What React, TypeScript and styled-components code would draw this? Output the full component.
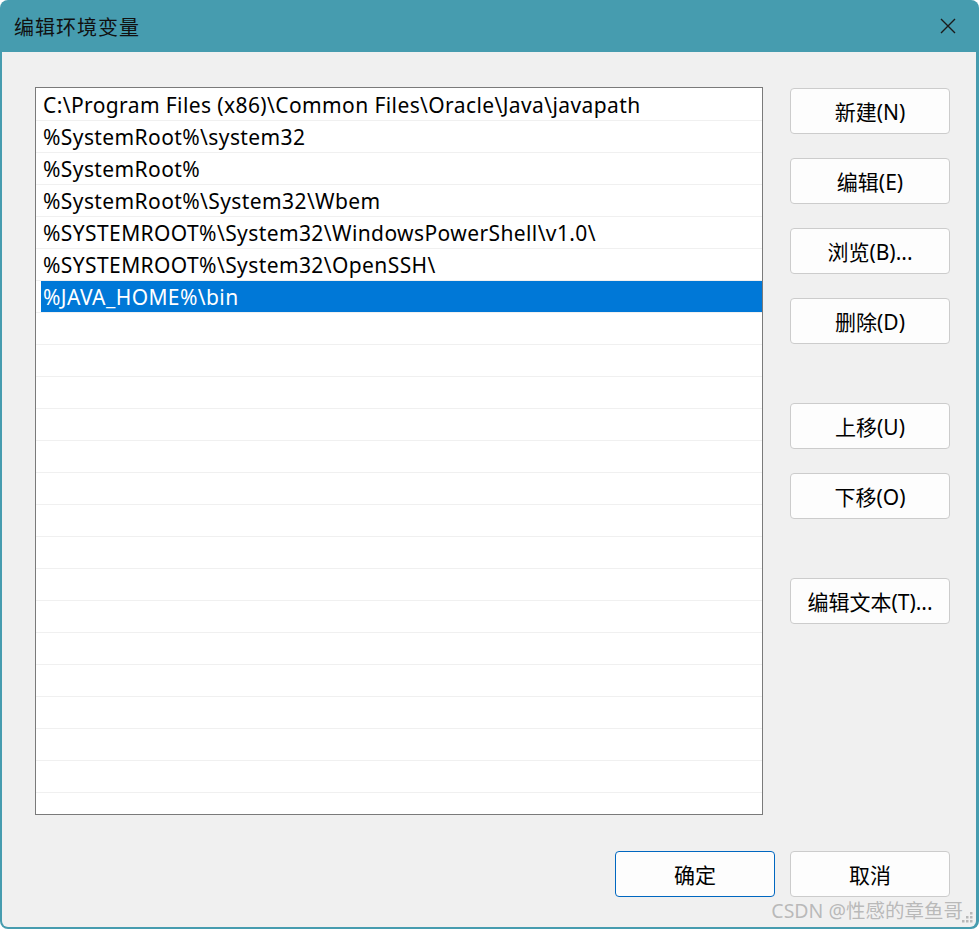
import React from "react";
import styled, { createGlobalStyle } from "styled-components";

const GlobalStyle = createGlobalStyle`
  html, body { margin: 0; padding: 0; background: #ffffff; }
  body { font-family: "Noto Sans", "Noto Sans CJK SC", sans-serif; }
  * { box-sizing: border-box; }
`;

const Window = styled.div`
  position: relative;
  width: 979px;
  height: 929px;
  background: #469caf;
  border-radius: 8px;
  padding: 0 3px 2px 2px;
  display: flex;
  flex-direction: column;
  overflow: hidden;
`;

const TitleBar = styled.div`
  height: 52px;
  flex: none;
  display: flex;
  align-items: center;
  justify-content: space-between;
  padding: 0 20px 0 12px;
`;

const Title = styled.div`
  font-family: "Noto Sans CJK SC", sans-serif;
  font-size: 20px;
  letter-spacing: 1px;
  color: #111;
`;

const Close = styled.svg`
  width: 16px;
  height: 16px;
`;

const Body = styled.div`
  flex: 1;
  background: #f0f0f0;
  border-radius: 0 0 6px 6px;
  padding: 35px 0 0 33px;
  display: flex;
  flex-direction: column;
`;

const Main = styled.div`
  display: flex;
  gap: 27px;
`;

const List = styled.div`
  width: 728px;
  height: 728px;
  padding-top: 1px;
  border: 1px solid #7a7a7a;
  background: #ffffff;
  overflow: hidden;
`;

const Row = styled.div`
  height: 32px;
  border-bottom: 1px solid #f0f0f0;
  display: flex;
`;

const Cell = styled.div<{ $selected?: boolean }>`
  flex: 1;
  margin-left: 5px;
  padding: 1px 0 0 2px;
  background: ${(p) => (p.$selected ? "#0078d7" : "transparent")};
  color: ${(p) => (p.$selected ? "#ffffff" : "#000000")};
  font-family: "Noto Sans", sans-serif;
  font-size: 21px;
  letter-spacing: 0.4px;
  line-height: 30px;
  white-space: nowrap;
`;

const SideButtons = styled.div`
  display: flex;
  flex-direction: column;
  padding-top: 1px;
`;

const Button = styled.button<{ $gap?: number; $primary?: boolean }>`
  width: 160px;
  height: 46px;
  margin-top: ${(p) => p.$gap ?? 0}px;
  border: 1px solid ${(p) => (p.$primary ? "#0067c0" : "#cccccc")};
  border-radius: 4px;
  background: #fdfdfd;
  color: #000;
  font-family: "Noto Sans", "Noto Sans CJK SC", sans-serif;
  font-size: 21px;
  padding: 0;
  display: flex;
  align-items: center;
  justify-content: center;
`;

const Footer = styled.div`
  display: flex;
  justify-content: flex-end;
  gap: 15px;
  padding: 0 26px 0 0;
  margin-top: 36px;
`;

const Watermark = styled.div`
  position: absolute;
  right: 16px;
  bottom: 5px;
  font-family: "Noto Sans", "Noto Sans CJK SC", sans-serif;
  font-size: 19.5px;
  color: rgba(130, 130, 130, 0.5);
  pointer-events: none;
`;

const Grip = styled.svg`
  position: absolute;
  right: 5px;
  bottom: 5px;
  width: 14px;
  height: 14px;
`;

const entries = [
  "C:\\Program Files (x86)\\Common Files\\Oracle\\Java\\javapath",
  "%SystemRoot%\\system32",
  "%SystemRoot%",
  "%SystemRoot%\\System32\\Wbem",
  "%SYSTEMROOT%\\System32\\WindowsPowerShell\\v1.0\\",
  "%SYSTEMROOT%\\System32\\OpenSSH\\",
  "%JAVA_HOME%\\bin",
];

const side: { label: string; gap: number }[] = [
  { label: "新建(N)", gap: 0 },
  { label: "编辑(E)", gap: 24 },
  { label: "浏览(B)...", gap: 24 },
  { label: "删除(D)", gap: 24 },
  { label: "上移(U)", gap: 59 },
  { label: "下移(O)", gap: 24 },
  { label: "编辑文本(T)...", gap: 59 },
];

export default function App() {
  const rows = Array.from({ length: 24 }, (_, i) => entries[i] ?? "");
  return (
    <>
      <GlobalStyle />
      <Window>
        <TitleBar>
          <Title>编辑环境变量</Title>
          <Close viewBox="0 0 16 16">
            <path d="M1 1 L15 15 M15 1 L1 15" stroke="#1a1a1a" strokeWidth="1.4" fill="none" />
          </Close>
        </TitleBar>
        <Body>
          <Main>
            <List>
              {rows.map((t, i) => (
                <Row key={i}>
                  <Cell $selected={i === 6}>{t}</Cell>
                </Row>
              ))}
            </List>
            <SideButtons>
              {side.map((b) => (
                <Button key={b.label} $gap={b.gap}>
                  {b.label}
                </Button>
              ))}
            </SideButtons>
          </Main>
          <Footer>
            <Button $primary>确定</Button>
            <Button>取消</Button>
          </Footer>
        </Body>
        <Watermark>CSDN @性感的章鱼哥</Watermark>
        <Grip viewBox="0 0 14 14">
          {[
            [11, 3],
            [7, 7],
            [11, 7],
            [3, 11],
            [7, 11],
            [11, 11],
          ].map(([x, y], i) => (
            <rect key={i} x={x - 1} y={y - 1} width="2.5" height="2.5" fill="#b8b8b8" />
          ))}
        </Grip>
      </Window>
    </>
  );
}
